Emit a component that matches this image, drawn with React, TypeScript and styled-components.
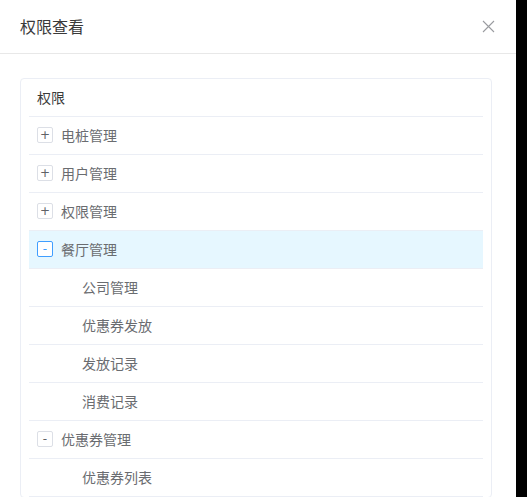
import React from "react";
import styled, { createGlobalStyle } from "styled-components";

const Global = createGlobalStyle`
  html, body { margin: 0; padding: 0; background: #fff; }
  body { font-family: "Noto Sans CJK SC", "Noto Sans", sans-serif; }
  * { box-sizing: border-box; }
`;

const Page = styled.div`
  display: flex;
  width: 527px;
  height: 497px;
  overflow: hidden;
`;

const Modal = styled.div`
  width: 516px;
  height: 497px;
  background: #fff;
  display: flex;
  flex-direction: column;
  overflow: hidden;
`;

const Mask = styled.div`
  flex: 1;
  background: #000;
`;

const Header = styled.div`
  height: 54px;
  flex-shrink: 0;
  display: flex;
  align-items: center;
  justify-content: space-between;
  padding: 0 21px 0 20px;
  border-bottom: 1px solid #e8e8e8;
`;

const Title = styled.div`
  font-size: 16px;
  color: #3a3a3a;
  line-height: 24px;
  margin-top: -2px;
`;

const Close = styled.button`
  border: none;
  background: none;
  padding: 0;
  width: 14px;
  height: 14px;
  display: flex;
  align-items: center;
  justify-content: center;
  cursor: pointer;
`;

const Body = styled.div`
  padding: 24px 24px 0 20px;
  flex: 1;
`;

const Card = styled.div`
  border: 1px solid #ebeef5;
  border-radius: 4px;
  padding: 0 8px;
`;

const Row = styled.div<{ $active?: boolean; $indent?: number }>`
  height: 38px;
  display: flex;
  align-items: center;
  padding-left: ${(p) => 8 + (p.$indent || 0)}px;
  padding-bottom: 2px;
  border-bottom: 1px solid #ebeef5;
  background: ${(p) => (p.$active ? "#e6f7ff" : "transparent")};
  font-size: 14px;
  color: #6a6c70;
`;

const HeadRow = styled(Row)`
  color: #3a3a3a;
`;

const Toggle = styled.span<{ $active?: boolean }>`
  width: 16px;
  height: 16px;
  border: 1px solid ${(p) => (p.$active ? "#409eff" : "#dcdfe6")};
  border-radius: 2px;
  display: inline-flex;
  align-items: center;
  justify-content: center;
  margin-right: 8px;
  color: ${(p) => (p.$active ? "#409eff" : "#606266")};
  font-size: 12px;
  line-height: 1;
  font-family: "DejaVu Sans", sans-serif;
  background: #fff;
`;

type Item = { label: string; toggle?: "+" | "-"; child?: boolean; active?: boolean };

const items: Item[] = [
  { label: "电桩管理", toggle: "+" },
  { label: "用户管理", toggle: "+" },
  { label: "权限管理", toggle: "+" },
  { label: "餐厅管理", toggle: "-", active: true },
  { label: "公司管理", child: true },
  { label: "优惠券发放", child: true },
  { label: "发放记录", child: true },
  { label: "消费记录", child: true },
  { label: "优惠券管理", toggle: "-" },
  { label: "优惠券列表", child: true },
];

export default function App() {
  return (
    <Page>
      <Global />
      <Modal>
        <Header>
          <Title>权限查看</Title>
          <Close aria-label="close">
            <svg width="13" height="13" viewBox="0 0 13 13">
              <path d="M1 1 L12 12 M12 1 L1 12" stroke="#9a9ca0" strokeWidth="1.1" fill="none" />
            </svg>
          </Close>
        </Header>
        <Body>
          <Card>
            <HeadRow>权限</HeadRow>
            {items.map((it) => (
              <Row key={it.label} $active={it.active} $indent={it.child ? 45 : 0}>
                {it.toggle && <Toggle $active={it.active}>{it.toggle}</Toggle>}
                {it.label}
              </Row>
            ))}
          </Card>
        </Body>
      </Modal>
      <Mask />
    </Page>
  );
}
